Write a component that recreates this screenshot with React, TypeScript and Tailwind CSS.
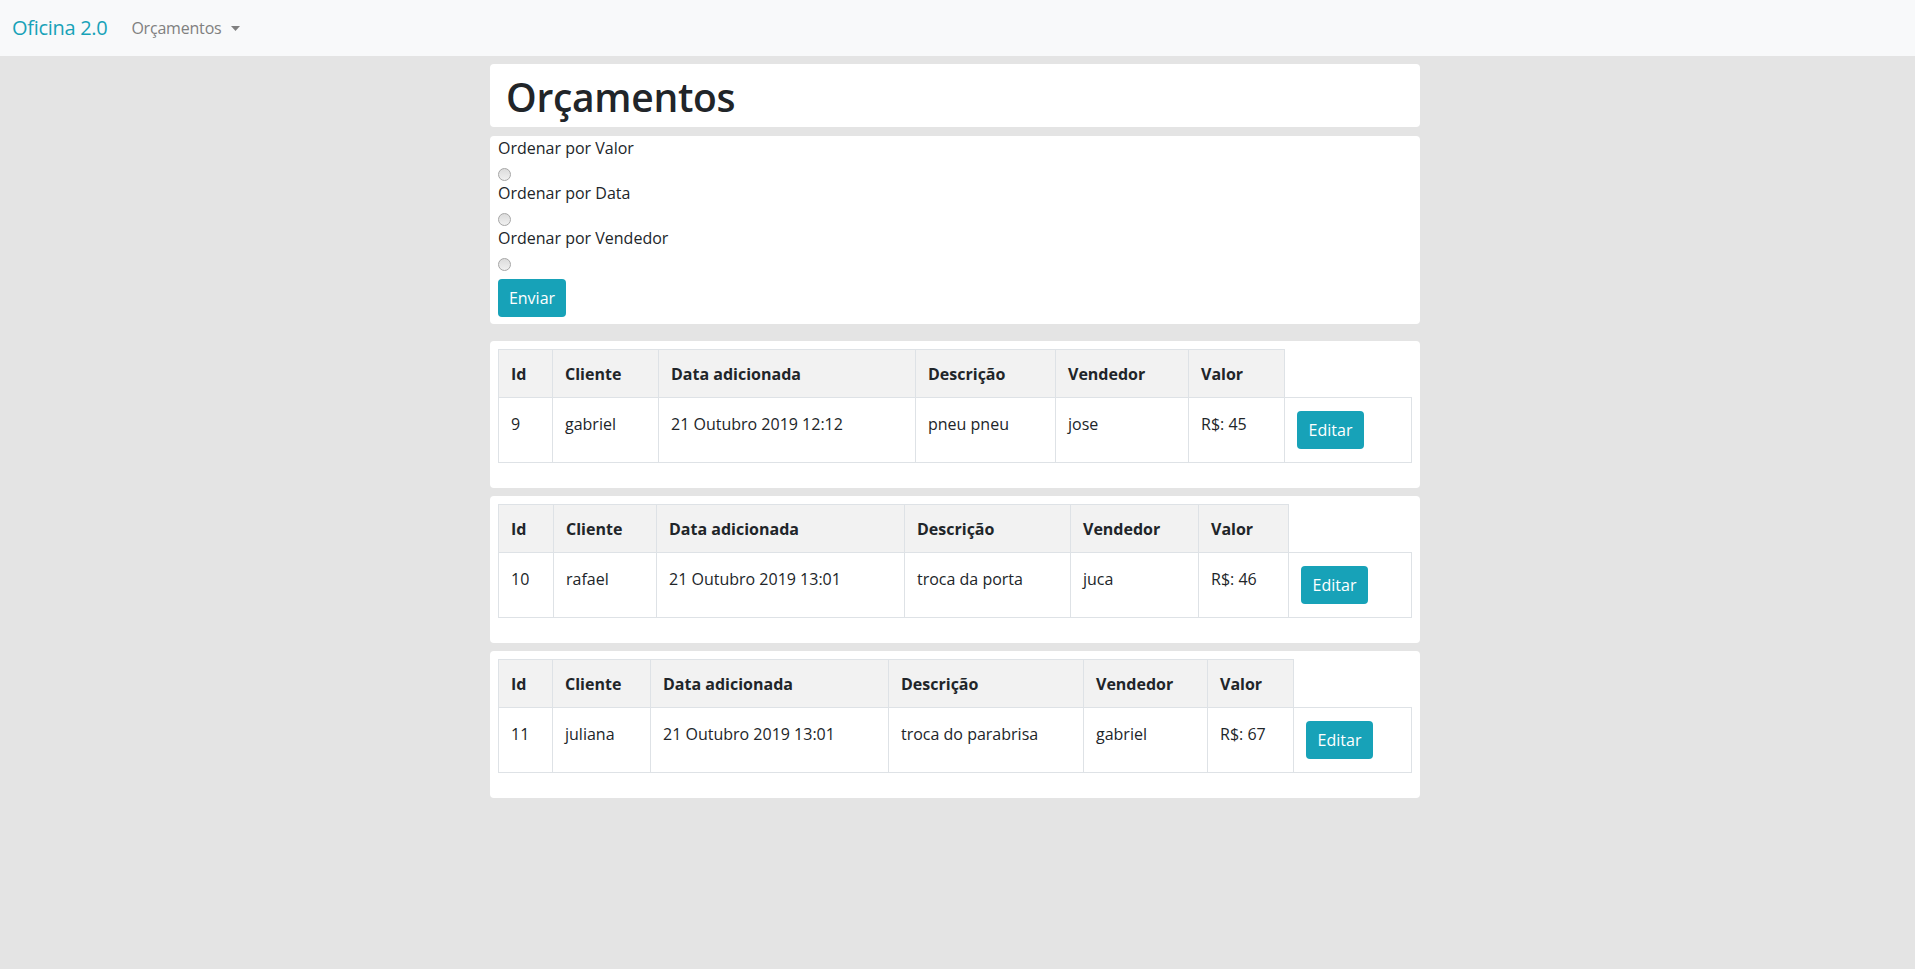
import React from "react";

type Orcamento = {
  id: number;
  cliente: string;
  data: string;
  descricao: string;
  vendedor: string;
  valor: number;
  cols: string[];
};

const orcamentos: Orcamento[] = [
  {
    id: 9,
    cliente: "gabriel",
    data: "21 Outubro 2019 12:12",
    descricao: "pneu pneu",
    vendedor: "jose",
    valor: 45,
    cols: ["w-[54px]", "w-[106px]", "w-[257px]", "w-[140px]", "w-[133px]", "w-[96px]", "w-[127px]"],
  },
  {
    id: 10,
    cliente: "rafael",
    data: "21 Outubro 2019 13:01",
    descricao: "troca da porta",
    vendedor: "juca",
    valor: 46,
    cols: ["w-[55px]", "w-[103px]", "w-[248px]", "w-[166px]", "w-[128px]", "w-[90px]", "w-[123px]"],
  },
  {
    id: 11,
    cliente: "juliana",
    data: "21 Outubro 2019 13:01",
    descricao: "troca do parabrisa",
    vendedor: "gabriel",
    valor: 67,
    cols: ["w-[54px]", "w-[98px]", "w-[238px]", "w-[195px]", "w-[124px]", "w-[86px]", "w-[118px]"],
  },
];

const headers = ["Id", "Cliente", "Data adicionada", "Descrição", "Vendedor", "Valor"];

const ordens = ["Ordenar por Valor", "Ordenar por Data", "Ordenar por Vendedor"];

function Radio() {
  return (
    <div className="h-[21px] pt-2">
      <span className="block w-[13px] h-[13px] rounded-full border border-[#a6a6a6] bg-gradient-to-b from-[#dcdcdc] to-[#f0f0f0]" />
    </div>
  );
}

function TabelaOrcamento({ o, first }: { o: Orcamento; first: boolean }) {
  const td = "border border-[#dee2e6] px-3 pt-[14px] align-top";
  return (
    <div className={`bg-white rounded-[4px] pt-2 px-2 pb-[25px] ${first ? "mt-[17px]" : "mt-2"}`}>
      <table className="w-[913px] table-fixed border-collapse">
        <colgroup>
          {o.cols.map((c, i) => (
            <col key={i} className={c} />
          ))}
        </colgroup>
        <thead>
          <tr>
            {headers.map((h) => (
              <th
                key={h}
                className="border border-[#dee2e6] bg-[#f2f2f2] h-[48px] px-3 text-left font-bold align-middle"
              >
                {h}
              </th>
            ))}
          </tr>
        </thead>
        <tbody>
          <tr className="h-[65px]">
            <td className={td}>{o.id}</td>
            <td className={td}>{o.cliente}</td>
            <td className={td}>{o.data}</td>
            <td className={td}>{o.descricao}</td>
            <td className={td}>{o.vendedor}</td>
            <td className={td}>R$: {o.valor}</td>
            <td className="border border-[#dee2e6] px-3 pt-[13px] align-top">
              <button className="h-[38px] w-[67px] rounded-[4px] bg-[#17a2b8] text-white">
                Editar
              </button>
            </td>
          </tr>
        </tbody>
      </table>
    </div>
  );
}

export default function App() {
  return (
    <div className="min-h-screen bg-[#e4e4e4] text-[#212529] text-base leading-6 font-['Open_Sans',sans-serif]">
      <nav className="h-14 bg-[#f8f9fa] flex items-center px-3">
        <span className="text-[20px] tracking-[-0.3px] text-[#17a2b8] mr-4">Oficina 2.0</span>
        <span className="flex items-center px-2 tracking-[-0.2px] text-[#808080]">
          Orçamentos
          <svg className="ml-[10px] mt-[1px]" width="9" height="5" viewBox="0 0 9 5">
            <path d="M0 0h9L4.5 5z" fill="#808080" />
          </svg>
        </span>
      </nav>

      <div className="pr-[5px]">
        <main className="w-[930px] mx-auto pt-2 pb-10">
          <div className="bg-white rounded-[4px] h-[63px] pl-4 pt-[9px]">
            <h1 className="text-[39px] leading-[48px] font-semibold tracking-[-0.3px]">Orçamentos</h1>
          </div>

          <form className="mt-[9px] bg-white rounded-[4px] px-2 pb-[7px]" onSubmit={(e) => e.preventDefault()}>
            {ordens.map((t) => (
              <div key={t}>
                <label className="block">{t}</label>
                <Radio />
              </div>
            ))}
            <button className="mt-2 h-[38px] w-[68px] rounded-[4px] bg-[#17a2b8] text-white">
              Enviar
            </button>
          </form>

          {orcamentos.map((o, i) => (
            <TabelaOrcamento key={o.id} o={o} first={i === 0} />
          ))}
        </main>
      </div>
    </div>
  );
}
